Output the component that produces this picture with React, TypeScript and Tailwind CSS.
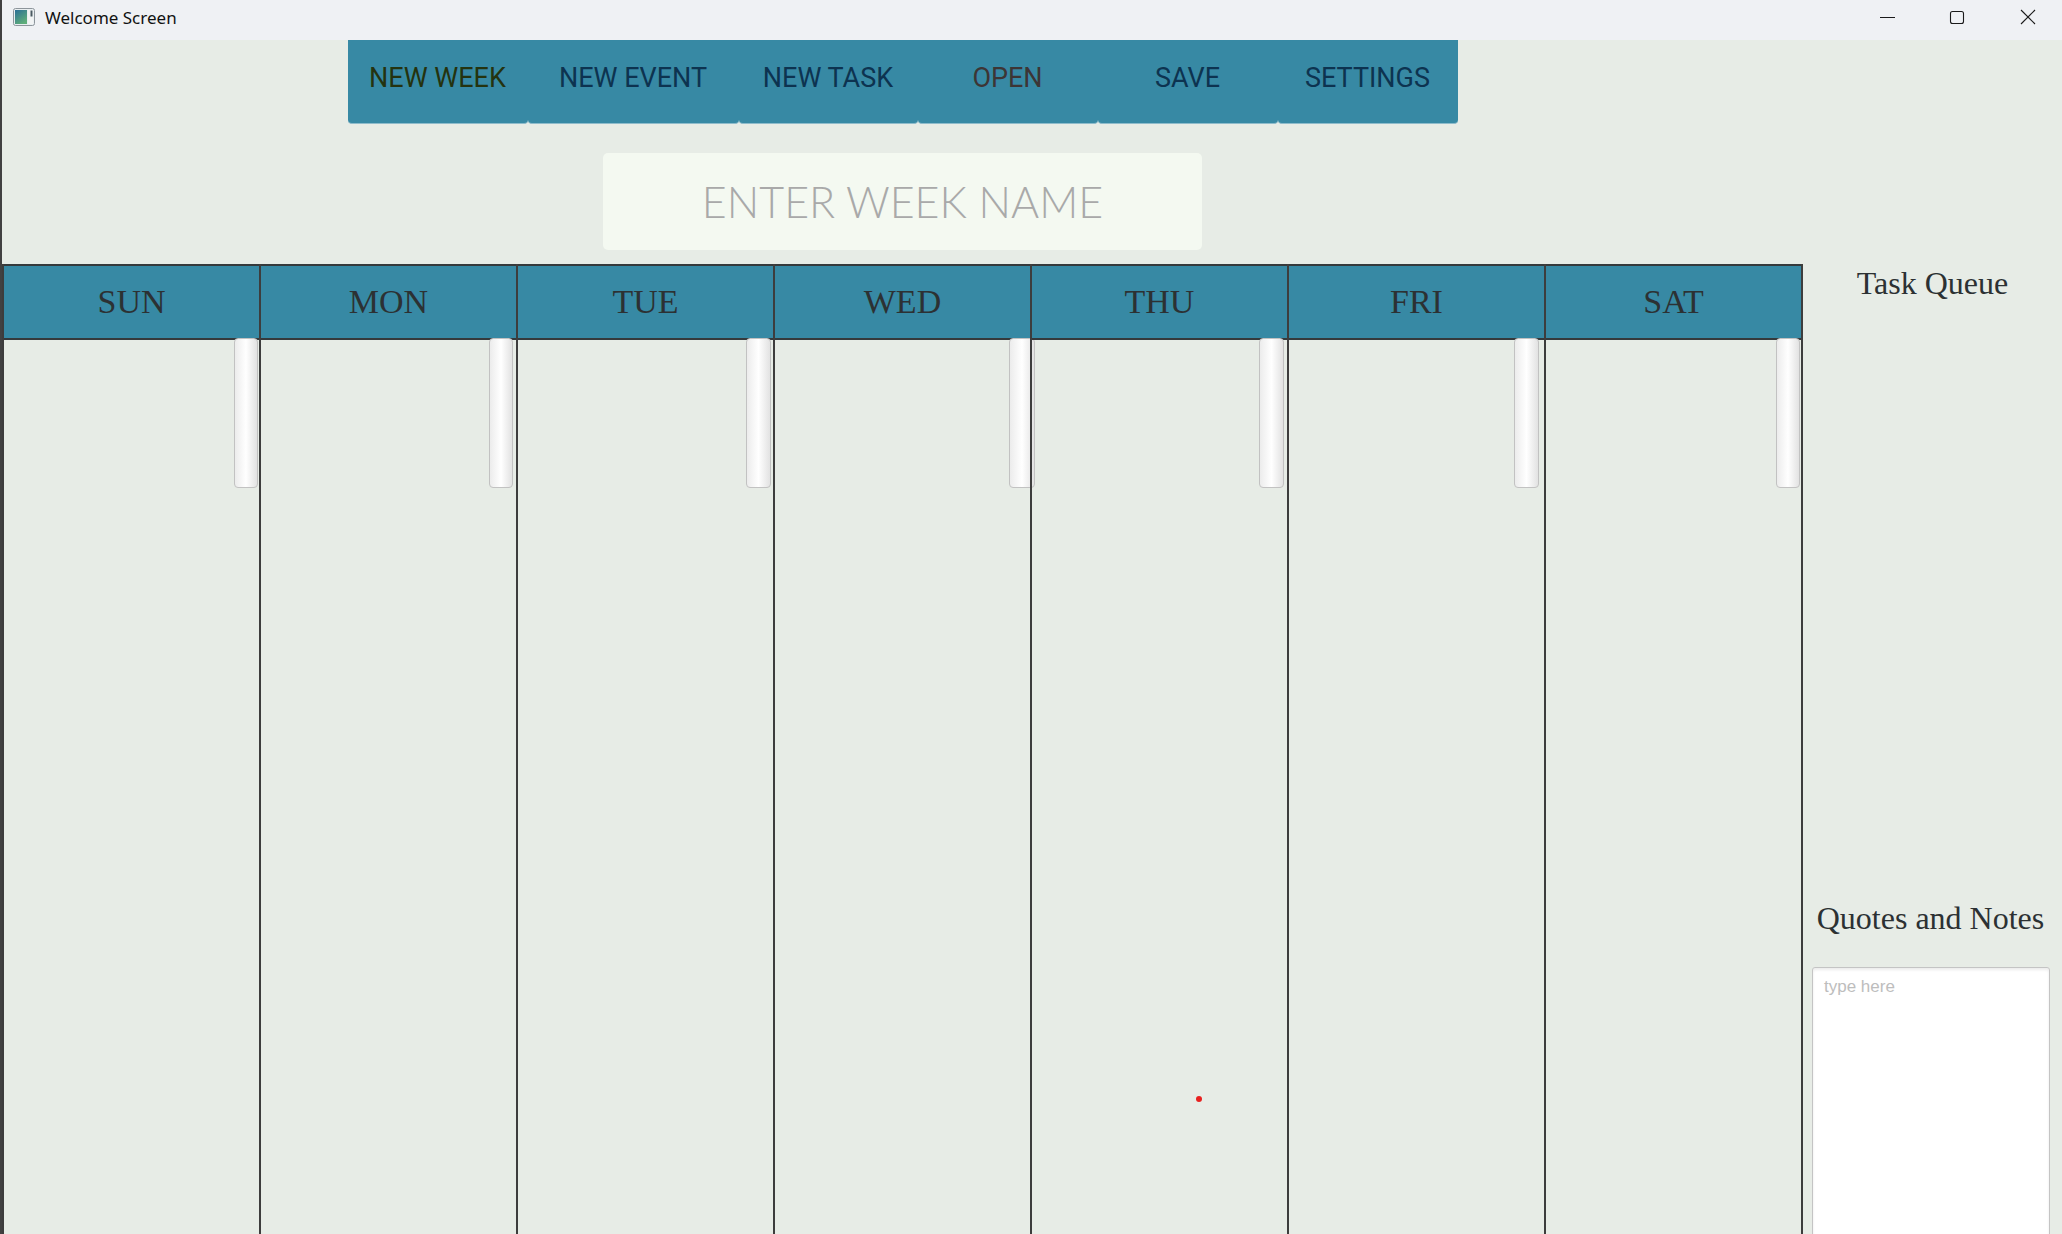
import React from "react";

const teal = "bg-[#3789a4]";

const menu: { label: string; w: string; color: string }[] = [
  { label: "NEW WEEK", w: "w-[180px]", color: "text-[#24330f]" },
  { label: "NEW EVENT", w: "w-[211px]", color: "text-[#0d3350]" },
  { label: "NEW TASK", w: "w-[179px]", color: "text-[#0d3350]" },
  { label: "OPEN", w: "w-[180px]", color: "text-[#3d3535]" },
  { label: "SAVE", w: "w-[180px]", color: "text-[#0d3350]" },
  { label: "SETTINGS", w: "w-[180px]", color: "text-[#0d3350]" },
];

const days: { name: string; thumb: string; last?: boolean; dot?: boolean }[] = [
  { name: "SUN", thumb: "right-[1px] w-[24px]" },
  { name: "MON", thumb: "right-[3px] w-[24px]" },
  { name: "TUE", thumb: "right-[2px] w-[25px]" },
  { name: "WED", thumb: "right-[-5px] w-[26px]" },
  { name: "THU", thumb: "right-[3px] w-[25px]", dot: true },
  { name: "FRI", thumb: "right-[5px] w-[25px]" },
  { name: "SAT", thumb: "right-[1px] w-[24px]", last: true },
];

function TitleBar() {
  return (
    <div className="h-[40px] flex items-center bg-[#eff1f4] shrink-0 pb-[6px]">
      <svg width="22" height="18" viewBox="0 0 22 18" className="ml-[11px]">
        <defs>
          <linearGradient id="ig" x1="0" y1="0" x2="0.6" y2="1">
            <stop offset="0" stopColor="#2b6f96" />
            <stop offset="1" stopColor="#5fae7a" />
          </linearGradient>
        </defs>
        <rect x="0.5" y="0.5" width="21" height="17" rx="2" fill="#e9eef0" stroke="#8d959b" />
        <rect x="2" y="2" width="12" height="14" fill="url(#ig)" />
        <rect x="15" y="2" width="5" height="14" fill="#f2f4f4" />
        <rect x="17.5" y="2.5" width="2" height="6" fill="#4a5a62" />
      </svg>
      <span className="ml-[10px] text-[17px] text-[#111] leading-none" style={{ fontFamily: '"Noto Sans", "Open Sans", sans-serif' }}>
        Welcome Screen
      </span>
      <div className="flex-1" />
      <svg width="16" height="16" viewBox="0 0 16 16" className="mr-[53px]">
        <line x1="0" y1="8.5" x2="15" y2="8.5" stroke="#1a1a1a" strokeWidth="1" />
      </svg>
      <svg width="16" height="16" viewBox="0 0 16 16" className="mr-[55px]">
        <rect x="1.5" y="2.5" width="13" height="12" rx="2" fill="none" stroke="#1a1a1a" strokeWidth="1.1" />
      </svg>
      <svg width="16" height="16" viewBox="0 0 16 16" className="mr-[26px]">
        <line x1="1" y1="1" x2="15" y2="15" stroke="#1a1a1a" strokeWidth="1.1" />
        <line x1="15" y1="1" x2="1" y2="15" stroke="#1a1a1a" strokeWidth="1.1" />
      </svg>
    </div>
  );
}

function MenuBar() {
  return (
    <div className="flex justify-center">
      <div className="flex">
        {menu.map((m) => (
          <div
            key={m.label}
            className={`${m.w} h-[84px] ${teal} rounded-b-[4px] border-b border-[#8fbccb] flex justify-center pt-[25px]`}
          >
            <span
              className={`text-[27px] leading-none ${m.color}`}
              style={{ fontFamily: 'Roboto, "Noto Sans", sans-serif' }}
            >
              {m.label}
            </span>
          </div>
        ))}
      </div>
    </div>
  );
}

function DayColumn({ d }: { d: (typeof days)[number] }) {
  return (
    <div
      className={`relative w-[257px] flex flex-col border-l-2 border-[#3d3d3d] ${d.last ? "border-r-2 w-[259px]" : ""}`}
    >
      <div className={`h-[76px] ${teal} border-y-2 border-[#353a3c] flex items-center justify-center`}>
        <span
          className="text-[34px] leading-none text-[#2c3133]"
          style={{ fontFamily: '"Liberation Serif", "Times New Roman", serif' }}
        >
          {d.name}
        </span>
      </div>
      <div className="relative flex-1">
        <div
          className={`absolute top-[-2px] h-[150px] ${d.thumb} rounded-[4px] border border-[#c2c2c2] bg-linear-to-r from-[#ececec] via-white to-[#e2e2e2]`}
        />
        {d.dot && <div className="absolute left-[164px] top-[756px] w-[6px] h-[6px] rounded-full bg-[#e8201f]" />}
      </div>
    </div>
  );
}

export default function App() {
  return (
    <div className="w-[2062px] h-[1234px] overflow-hidden flex flex-col bg-[#e7ece6] border-l-2 border-[#414141]">
      <TitleBar />
      <div className="flex flex-1">
        <div className="w-[1801px] flex flex-col">
          <MenuBar />
          <div className="mt-[29px] self-center w-[599px] h-[97px] rounded-[5px] bg-[#f4f9f1] flex items-center justify-center">
            <input
              className="w-full h-full bg-transparent text-center outline-none text-[43px] font-light text-[#555] placeholder:text-[#a9a9a9]"
              style={{ fontFamily: 'Lato, "Open Sans", sans-serif' }}
              placeholder="ENTER WEEK NAME"
            />
          </div>
          <div className="mt-[14px] flex flex-1">
            {days.map((d) => (
              <DayColumn key={d.name} d={d} />
            ))}
          </div>
        </div>
        <div className="flex-1 flex flex-col pt-[227px]">
          <div
            className="text-[32px] leading-none text-[#2c3133] text-center"
            style={{ fontFamily: '"Liberation Serif", "Times New Roman", serif' }}
          >
            Task Queue
          </div>
          <div className="h-[603px] shrink-0" />
          <div
            className="text-[32px] leading-none text-[#2c3133] text-center pr-[4px]"
            style={{ fontFamily: '"Liberation Serif", "Times New Roman", serif' }}
          >
            Quotes and Notes
          </div>
          <textarea
            className="mt-[33px] ml-[9px] w-[238px] h-[300px] shrink-0 bg-white border border-[#c4c4c4] rounded-[3px] shadow-[inset_0_2px_3px_rgba(0,0,0,0.08)] px-[11px] py-[6px] text-[17px] outline-none resize-none placeholder:text-[#bdbdbd]"
            style={{ fontFamily: '"Liberation Sans", Arial, sans-serif' }}
            placeholder="type here"
          />
        </div>
      </div>
    </div>
  );
}
